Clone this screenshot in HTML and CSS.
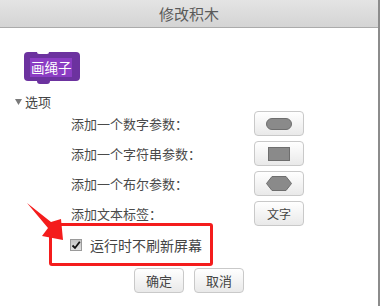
FILE: index.html
```html
<!DOCTYPE html>
<html lang="zh">
<head>
<meta charset="utf-8">
<link rel="stylesheet" href="styles.css">
</head>
<body>
<div class="dialog">
  <div class="header">修改积木</div>
  <div class="content">
    <div class="block-area">
      <div class="block"><span class="block-label">画绳子</span></div>
    </div>
    <div class="options-toggle">
      <svg class="tri" width="7" height="6" viewBox="0 0 7 6"><polygon points="0,0 7,0 3.5,6" fill="#7a7a7a"/></svg>
      <span>选项</span>
    </div>
    <div class="rows">
      <div class="row-label">添加一个数字参数：</div>
      <button class="btn param-btn"><svg width="26" height="12" viewBox="0 0 26 12"><rect x="0.5" y="0.5" width="25" height="11" rx="5.5" fill="#8a8a8a" stroke="#6e6e6e"/></svg></button>
      <div class="row-label">添加一个字符串参数：</div>
      <button class="btn param-btn"><svg width="22" height="14" viewBox="0 0 22 14"><rect x="0.5" y="0.5" width="21" height="13" fill="#8a8a8a" stroke="#6e6e6e"/></svg></button>
      <div class="row-label">添加一个布尔参数：</div>
      <button class="btn param-btn"><svg width="26" height="15" viewBox="0 0 26 15"><polygon points="0.5,7.5 6,0.5 20,0.5 25.5,7.5 20,14.5 6,14.5" fill="#8a8a8a" stroke="#6e6e6e"/></svg></button>
      <div class="row-label">添加文本标签：</div>
      <button class="btn param-btn text-btn">文字</button>
    </div>
    <div class="check-row">
      <span class="checkbox"><svg width="10" height="10" viewBox="0 0 10 10"><path d="M1.5 5.5 L4 8 L8.8 1.8" fill="none" stroke="#111" stroke-width="1.8"/></svg></span>
      <span class="check-label">运行时不刷新屏幕</span>
    </div>
    <div class="actions">
      <button class="btn action-btn">确定</button>
      <button class="btn action-btn">取消</button>
    </div>
  </div>
  <div class="highlight"></div>
  <svg class="arrow" width="50" height="45" viewBox="0 0 50 45">
    <polygon points="2,3 26,22 36,19 38,40 17,36 23,28" fill="#f41c1c"/>
  </svg>
</div>
</body>
</html>
```
FILE: styles.css
```css
* { box-sizing: border-box; }
html, body { margin: 0; padding: 0; background: #fff; }
body { width: 381px; height: 306px; overflow: hidden; font-family: "Noto Sans CJK SC", "Noto Sans", sans-serif; }
.dialog {
  position: relative;
  width: 380px;
  height: 306px;
  border-right: 2px solid #8c8c8c;
  background: #fff;
}
.header {
  height: 28px;
  line-height: 27px;
  text-align: center;
  font-size: 15px;
  color: #5a5a5a;
  background: linear-gradient(#e4e4e4, #d4d4d4);
  border-bottom: 1px solid #ababab;
}
.content { display: flex; flex-direction: column; }
.block-area { height: 33px; margin-top: 24px; padding-left: 24px; }
.block {
  position: relative;
  width: 56px;
  height: 29px;
  background: #6c329f;
  border-radius: 4px;
  padding: 6px 0 0 6px;
}
.block::before {
  content: "";
  position: absolute;
  left: 13px; top: 0;
  width: 12px; height: 2px;
  background: #fff;
  border-radius: 0 0 3px 3px;
}
.block::after {
  content: "";
  position: absolute;
  left: 13px; bottom: -3px;
  width: 13px; height: 3px;
  background: #6c329f;
  border-radius: 0 0 3px 3px;
}
.block-label {
  display: block;
  width: 42px;
  height: 19px;
  background: #8b3dc3;
  color: #fff;
  font-size: 13.5px;
  line-height: 19px;
  padding-left: 1px;
  white-space: nowrap;
}
.options-toggle {
  display: flex;
  align-items: center;
  gap: 3px;
  height: 16px;
  margin-top: 8px;
  padding-left: 15px;
  font-size: 13px;
  color: #444;
}
.tri { margin-top: 1px; }
.rows {
  display: grid;
  grid-template-columns: 183px 50px;
  grid-auto-rows: 25px;
  row-gap: 5px;
  margin-top: 2px;
  padding-left: 71px;
  align-items: center;
}
.row-label { font-size: 13px; color: #4a4a4a; line-height: 25px; }
.btn {
  border: 1px solid #c9c9c9;
  border-radius: 4px;
  background: linear-gradient(#ffffff, #e9e9e9);
  padding: 0;
  margin: 0;
  font-family: inherit;
  color: #444;
  display: flex;
  align-items: center;
  justify-content: center;
}
.param-btn { width: 50px; height: 25px; }
.param-btn svg { display: block; }
.text-btn { font-size: 12px; }
.check-row {
  display: flex;
  align-items: center;
  height: 26px;
  margin-top: 6px;
  padding-left: 70px;
}
.checkbox {
  width: 12px; height: 12px;
  border: 1px solid #9a9a9a;
  background: linear-gradient(#c4c4c4, #e0e0e0);
  display: flex; align-items: center; justify-content: center;
}
.check-label { margin-left: 8px; font-size: 14px; color: #444; }
.actions {
  display: flex;
  justify-content: center;
  gap: 10px;
  margin-top: 10px;
}
.action-btn { width: 50px; height: 25px; font-size: 13px; }
.highlight {
  position: absolute;
  left: 49px; top: 223px;
  width: 164px; height: 43px;
  border: 3px solid #f41c1c;
  border-radius: 3px;
}
.arrow { position: absolute; left: 25px; top: 200px; }
```
